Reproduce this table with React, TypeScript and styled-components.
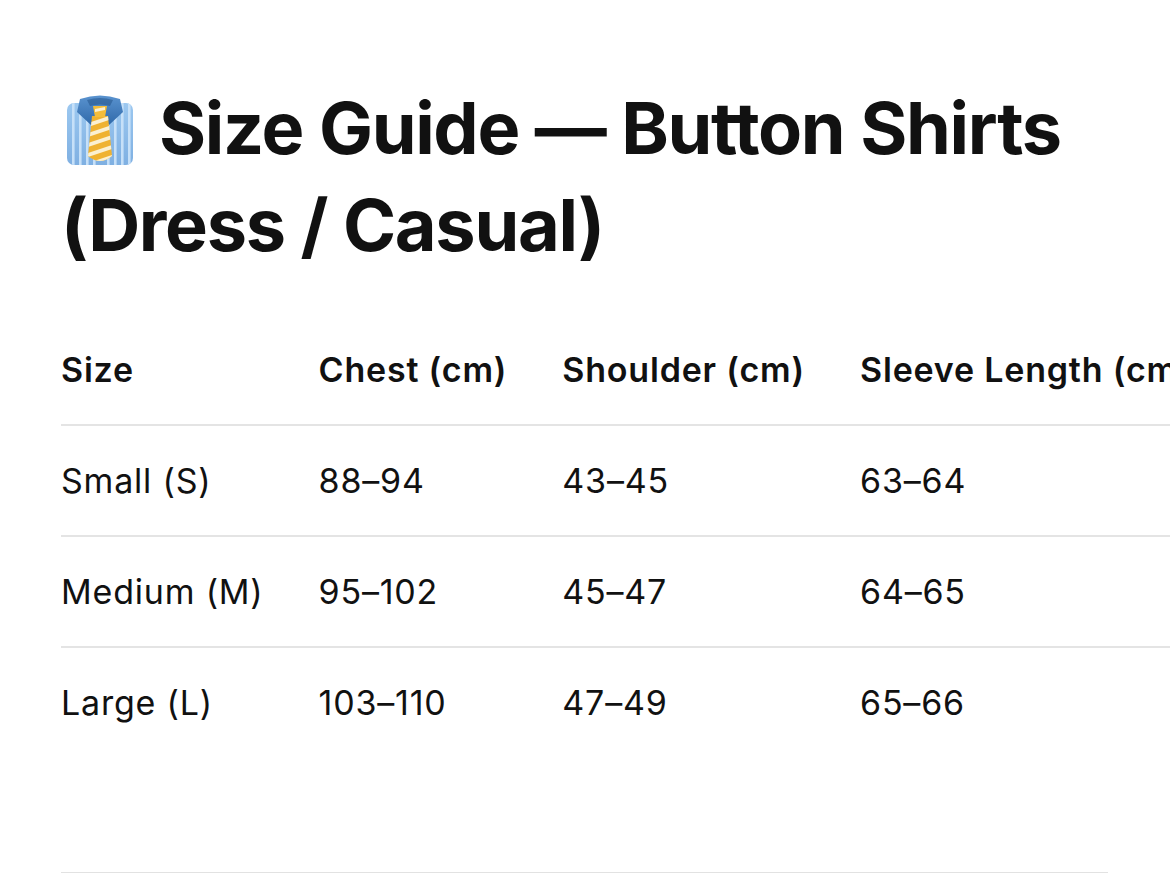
import styled, { createGlobalStyle } from "styled-components";

interface SizeRow {
  size: string;
  chest: string;
  shoulder: string;
  sleeve: string;
}

const rows: SizeRow[] = [
  { size: "Small (S)", chest: "88–94", shoulder: "43–45", sleeve: "63–64" },
  { size: "Medium (M)", chest: "95–102", shoulder: "45–47", sleeve: "64–65" },
  { size: "Large (L)", chest: "103–110", shoulder: "47–49", sleeve: "65–66" },
];

const GlobalStyle = createGlobalStyle`
  html, body {
    margin: 0;
    padding: 0;
    background: #ffffff;
    overflow-x: hidden;
  }
  body {
    font-family: Inter, "Noto Sans", "Liberation Sans", sans-serif;
    color: #111111;
    -webkit-font-smoothing: antialiased;
  }
`;

const Page = styled.main`
  padding: 79px 62px 0 61px;
`;

const Title = styled.h1`
  margin: 0;
  font-size: 72px;
  line-height: 97px;
  font-weight: 700;
  letter-spacing: -1.3px;
  color: #111111;
`;

const Emoji = styled.svg`
  width: 70px;
  height: 72px;
  vertical-align: -12px;
  margin: 0 24px 0 4px;
`;

const TableScroll = styled.div`
  margin: 41px -62px 0 0;
  overflow: hidden;
`;

const Table = styled.table`
  border-collapse: collapse;
  white-space: nowrap;
  font-size: 34px;
  letter-spacing: 0.8px;
`;

const HeadCell = styled.th`
  text-align: left;
  font-weight: 600;
  padding: 0 55px 0 0;
  height: 110px;
  border-bottom: 2px solid #e4e4e4;
  vertical-align: middle;
`;

const Row = styled.tr`
  & + & td {
    border-top: 2px solid #e4e4e4;
  }
`;

const Cell = styled.td`
  padding: 0 55px 0 0;
  height: 109px;
  font-weight: 400;
  vertical-align: middle;
`;

const Rule = styled.hr`
  border: none;
  border-top: 2px solid #e2e2e2;
  margin: 115px 0 0;
`;

function TieEmoji() {
  return (
    <Emoji viewBox="0 0 70 72" aria-hidden="true">
      <defs>
        <linearGradient id="shirt" x1="0" y1="0" x2="0" y2="1">
          <stop offset="0" stopColor="#9cc8f0" />
          <stop offset="1" stopColor="#7fb0e2" />
        </linearGradient>
        <linearGradient id="collar" x1="0" y1="0" x2="0" y2="1">
          <stop offset="0" stopColor="#5a93cf" />
          <stop offset="1" stopColor="#2f69aa" />
        </linearGradient>
        <clipPath id="body">
          <rect x="2" y="9" width="66" height="62" rx="7" />
        </clipPath>
        <clipPath id="tie">
          <path d="M27 22 L43 22 L47 62 Q35 72 23 62 Z" />
        </clipPath>
      </defs>
      <g clipPath="url(#body)">
        <rect x="2" y="9" width="66" height="62" fill="url(#shirt)" />
        {[7, 14, 21, 28, 42, 49, 56, 63].map((x) => (
          <rect key={x} x={x} y="9" width="2.6" height="62" fill="#c6e0f8" />
        ))}
      </g>
      <path
        d="M15 5 Q35 -2 55 5 L58 18 L44 31 L35 16 L26 31 L12 18 Z"
        fill="url(#collar)"
      />
      <path d="M22 6 Q35 2 48 6 L45 12 Q35 9 25 12 Z" fill="#1f4f86" opacity="0.5" />
      <g clipPath="url(#tie)">
        <rect x="20" y="20" width="30" height="52" fill="#efb230" />
        {[20, 30, 40, 50, 60].map((y) => (
          <path key={y} d={`M20 ${y + 10} L50 ${y} L50 ${y + 4} L20 ${y + 14} Z`} fill="#fbf0d0" />
        ))}
      </g>
      <path d="M28 12 L42 12 L40 23 L30 23 Z" fill="#f4bd3b" />
      <path d="M30 15 L40 13 L40 16 L30 18 Z" fill="#fbf0d0" />
    </Emoji>
  );
}

export default function App() {
  return (
    <>
      <GlobalStyle />
      <Page>
        <Title>
          <TieEmoji />
          Size Guide — Button Shirts (Dress / Casual)
        </Title>
        <TableScroll>
          <Table>
            <thead>
              <tr>
                <HeadCell>Size</HeadCell>
                <HeadCell>Chest (cm)</HeadCell>
                <HeadCell>Shoulder (cm)</HeadCell>
                <HeadCell>Sleeve Length (cm)</HeadCell>
              </tr>
            </thead>
            <tbody>
              {rows.map((r) => (
                <Row key={r.size}>
                  <Cell>{r.size}</Cell>
                  <Cell>{r.chest}</Cell>
                  <Cell>{r.shoulder}</Cell>
                  <Cell>{r.sleeve}</Cell>
                </Row>
              ))}
            </tbody>
          </Table>
        </TableScroll>
        <Rule />
      </Page>
    </>
  );
}
